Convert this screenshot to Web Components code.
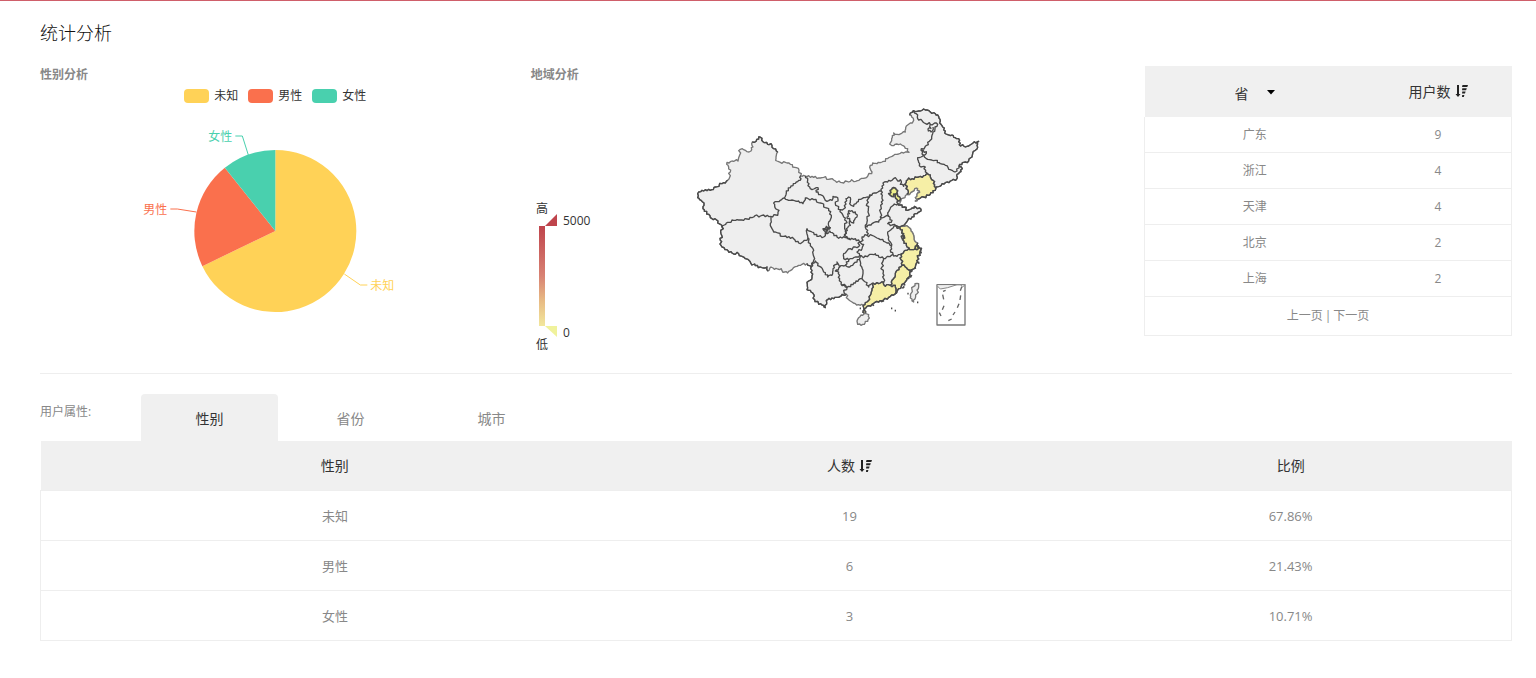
<!DOCTYPE html>
<html lang="zh-CN">
<head>
<meta charset="utf-8">
<meta name="viewport" content="width=device-width, initial-scale=1">
<title>统计分析</title>
<style>
  body {
    margin: 0;
    background: #fff;
    color: #888;
    font-family: "Open Sans", "Noto Sans CJK SC", sans-serif;
    font-size: 12px;
    line-height: 18px;
  }
</style>
</head>
<body>

<stats-page>
  <span slot="title">统计分析</span>
  <stats-panel slot="gender" heading="性别分析"><gender-chart></gender-chart></stats-panel>
  <stats-panel slot="region" heading="地域分析"><region-chart></region-chart></stats-panel>
  <province-table slot="provinces"></province-table>
  <user-attributes slot="attributes"></user-attributes>
</stats-page>

<script>
const GENDERS = [
  { name: '未知', count: 19, ratio: '67.86%', color: '#ffd257' },
  { name: '男性', count: 6, ratio: '21.43%', color: '#fa704d' },
  { name: '女性', count: 3, ratio: '10.71%', color: '#49d0ae' }
]

const PROVINCES = [
  ['广东', 9],
  ['浙江', 4],
  ['天津', 4],
  ['北京', 2],
  ['上海', 2]
]

class StatsPage extends HTMLElement {
  constructor() {
    super()
    this.shadow = this.attachShadow({ mode: 'open' })
  }

  connectedCallback() {
    this.shadow.innerHTML = /* html */`
      <style>
        :host {
          display: block;
          border-top: 1px solid #cf5f6a;
          padding: 20px 24px 36px 40px;
        }

        h1 {
          margin: 0 0 21px;
          color: #111;
          font-size: 18px;
          font-weight: 300;
          line-height: 24px;
        }

        .overview {
          display: grid;
          grid-template-columns: 4fr 5fr 3fr;
          padding-bottom: 17px;
          border-bottom: 1px solid #eee;
          margin-bottom: 20px;
        }
      </style>

      <main>
        <h1><slot name="title"></slot></h1>
        <div class="overview">
          <slot name="gender"></slot>
          <slot name="region"></slot>
          <slot name="provinces"></slot>
        </div>
        <slot name="attributes"></slot>
      </main>
    `
  }
}

class StatsPanel extends HTMLElement {
  constructor() {
    super()
    this.shadow = this.attachShadow({ mode: 'open' })
  }

  connectedCallback() {
    this.shadow.innerHTML = /* html */`
      <style>
        :host {
          display: block;
          min-width: 0;
        }

        h2 {
          margin: 0;
          font-size: 12px;
          font-weight: 700;
          line-height: 18px;
        }
      </style>

      <h2>${this.getAttribute('heading')}</h2>
      <slot></slot>
    `
  }
}

class GenderChart extends HTMLElement {
  constructor() {
    super()
    this.shadow = this.attachShadow({ mode: 'open' })
  }

  connectedCallback() {
    this.shadow.innerHTML = /* html */`
      <style>
        :host {
          display: block;
          padding: 3px 20px 0 0;
        }

        ul {
          display: flex;
          justify-content: center;
          gap: 10px;
          margin: 0;
          padding: 0;
          list-style: none;
          color: #333;
        }

        li {
          display: flex;
          align-items: center;
          gap: 5px;
        }

        i {
          width: 25px;
          height: 14px;
          border-radius: 4px;
        }

        svg {
          display: block;
          width: 100%;
          height: 200px;
          margin-top: 14px;
        }
      </style>

      <ul>
        ${GENDERS.map(g => `<li><i style="background:${g.color}"></i>${g.name}</li>`).join('')}
      </ul>
      <svg viewBox="-150 -112 300 200" font-size="12">
        ${this.slices()}
        <g fill="none">
          <path d="M69 43 L85 54 H92" stroke="#ffd257"/>
          <path d="M-79 -19 L-98 -22 H-105" stroke="#fa704d"/>
          <path d="M-27 -76 L-33 -95 H-40" stroke="#49d0ae"/>
        </g>
        <text x="95" y="59" fill="#ffd257">未知</text>
        <text x="-108" y="-17" fill="#fa704d" text-anchor="end">男性</text>
        <text x="-43" y="-90" fill="#49d0ae" text-anchor="end">女性</text>
      </svg>
    `
  }

  slices() {
    const r = 81
    const total = GENDERS.reduce((sum, g) => sum + g.count, 0)
    let from = 0
    return GENDERS.map(g => {
      const to = from + g.count / total * Math.PI * 2
      const large = to - from > Math.PI ? 1 : 0
      const d = `M0 0 L${r * Math.sin(from)} ${-r * Math.cos(from)} A${r} ${r} 0 ${large} 1 ${r * Math.sin(to)} ${-r * Math.cos(to)} Z`
      from = to
      return `<path d="${d}" fill="${g.color}"/>`
    }).join('')
  }
}

// Outline of the mainland, clockwise from the northern tip of Xinjiang
const MAINLAND = '209,110 215,114 218,124 232,132 245,135 250,145 262,155 257,170 256,180 265,184 285,186 300,192 318,202 326,210 331,226 345,227 370,231 400,231 420,236 450,246 480,243 510,236 532,228 545,215 540,195 547,188 560,190 575,185 595,172 620,162 640,158 656,156 652,145 642,138 625,133 610,136 598,131 604,115 610,98 620,102 632,100 645,95 646,82 660,68 670,60 664,50 658,44 665,36 680,33 695,30 710,29 720,35 735,40 745,48 750,62 757,80 763,98 772,103 785,104 795,112 808,120 807,133 820,137 835,137 848,128 865,123 860,135 855,150 847,160 845,170 835,182 820,186 808,192 813,200 812,214 800,222 800,235 785,240 770,245 755,250 748,258 736,265 720,282 700,290 682,296 675,302 680,288 688,276 682,265 673,265 662,276 650,282 644,292 632,296 630,305 622,309 630,314 642,320 652,330 662,326 672,318 692,327 688,334 675,340 665,350 652,360 645,370 632,378 648,376 662,392 670,405 673,422 682,428 686,442 692,448 688,460 682,472 682,485 675,500 665,508 658,520 650,535 640,550 625,565 615,580 600,588 580,598 565,605 545,612 530,618 522,630 525,640 518,636 520,622 518,615 510,615 495,610 480,602 472,595 468,582 455,582 450,588 430,595 408,600 405,622 400,615 385,612 373,598 370,582 360,570 350,568 355,542 365,532 362,500 350,490 335,492 320,498 305,508 292,518 278,516 273,505 252,507 242,500 233,512 230,500 210,500 195,496 180,485 165,475 145,460 125,458 110,448 95,440 90,420 94,405 95,380 82,368 78,358 65,355 55,342 42,333 38,325 41,315 32,300 22,292 22,280 35,270 60,270 75,260 95,250 112,240 120,215 115,200 110,186 125,182 143,182 150,147 165,150 182,152 188,140 186,125 198,122 205,110'

// Borders between provinces
const BORDERS = [
  '331,226 330,240 318,245 300,262 288,272 282,293',
  '282,293 270,300 250,308 254,322 266,330 262,345 242,348',
  '95,380 108,368 140,358 160,360 190,350 220,344 242,348',
  '242,348 240,370 250,395 280,408 310,415 330,430 348,420 352,412',
  '282,293 300,300 325,302 338,310 345,293 370,298 390,308 415,325 423,345 415,365 418,382 398,385 405,400',
  '352,412 350,385 365,395 380,408 400,410 405,400 418,392 430,400 440,410 465,412 480,418',
  '398,385 412,392 420,382 408,378 412,400',
  '352,412 360,430 370,450 370,480 362,500',
  '345,227 352,240 360,265 383,262 378,275 395,285 405,300 425,300 428,288 442,292 436,315 450,328 465,322 467,295 480,292 478,310 490,318 500,305 515,295 530,290 552,278 573,272',
  '450,328 458,345 468,362 463,385 465,408',
  '475,330 495,335 500,350 490,368 478,360 470,350 478,340 475,330',
  '478,360 480,375 468,385 465,408',
  '540,283 530,310 535,340 530,365 525,375 532,390 530,405',
  '530,405 515,410 518,420 508,425 495,415 480,418 465,408',
  '573,272 575,290 572,320 570,350 565,365 545,370 530,380 525,375',
  '573,272 578,248 592,245 605,240 615,232 622,242 630,238 630,252 640,258 645,250 652,268 650,282',
  '622,309 605,318 592,338 595,348 570,350',
  '595,348 605,360 592,370 605,374 617,376 632,378',
  '617,376 605,385 592,395 595,410 600,425 605,435',
  '530,405 545,405 565,415 585,425 605,435',
  '605,435 600,450 608,462',
  '508,425 520,432 515,445 500,455 508,465 520,472 535,465 555,460 570,472 580,475 592,468 608,462',
  '508,425 500,442 480,445 460,460 460,475 475,478 490,472 508,465',
  '617,376 630,388 640,400 638,420 648,435 655,442',
  '655,442 645,450 635,460',
  '608,462 620,468 635,460',
  '655,442 665,448 675,446 686,442',
  '635,460 632,478 635,495',
  '635,495 648,502 660,510 665,508',
  '635,495 620,510 615,525 605,540 600,555',
  '600,555 615,555 617,570 615,580',
  '600,555 585,558 580,545',
  '580,475 575,500 578,520 580,545',
  '580,545 565,550 548,548',
  '548,548 545,565 540,585 530,605 518,615',
  '548,548 535,560 525,545 515,535 518,510 510,495 508,478 508,465',
  '508,478 490,490 478,500 465,495 448,500 435,512 445,515 448,535 452,552',
  '362,500 375,482 388,498 400,515 412,530 425,525 428,505 440,485 448,500',
  '475,478 470,490 465,495',
  '452,552 475,558 490,548 505,538 515,535',
  '452,552 470,562 460,570 468,582',
  '665,36 678,40 682,55 698,65 720,72 738,68 740,78 728,95 720,120 705,138 692,150 700,165',
  '720,72 722,84 713,86 714,92 722,95 728,80',
  '692,150 708,154 700,165 718,178 735,180 750,190 765,195 780,208 800,212 808,192',
  '700,165 682,172 688,190 692,200 705,200 705,215 712,220',
  '645,250 652,238 665,235 685,230 705,225 712,220 720,230 728,240 732,258 736,265'
]

// Coasts and land borders that are drawn as heavily as the province borders
const EDGES = [
  '658,44 665,36 680,33 695,30 710,29 720,35 735,40 745,48 750,62 757,80 763,98 772,103 785,104 795,112 808,120 807,133 820,137 835,137 848,128 865,123 860,135 855,150 847,160 845,170 835,182 820,186 808,192 813,200 812,214 800,222 800,235 785,240 770,245 755,250 748,258 736,265 720,282 700,290 682,296',
  '622,309 630,314 642,320 652,330 662,326 672,318 692,327 688,334 675,340 665,350 652,360 645,370 632,378',
  '682,428 686,442 692,448 688,460 682,472 682,485 675,500 665,508 658,520 650,535 640,550 625,565 615,580 600,588 580,598 565,605 545,612 530,618 522,630 525,640 518,636 520,622 518,615',
  '468,582 455,582 450,588 430,595 408,600 405,622 400,615 385,612 373,598 370,582 360,570 350,568 355,542 365,532 362,500 350,490',
  '233,512 230,500 210,500 195,496 180,485 165,475 145,460 125,458 110,448 95,440 90,420 94,405 95,380 82,368 78,358 65,355 55,342 42,333 38,325 41,315 32,300 22,292 22,280 35,270 60,270 75,260 95,250 112,240',
  '186,125 198,122 205,110 209,110 215,114 218,124 232,132 245,135 250,145 262,155'
]

// Provinces that have users, filled by the scale
const ACTIVE = [
  // 辽宁
  '650,282 652,268 645,250 652,238 665,235 685,230 705,225 712,220 720,230 728,240 732,258 736,265 720,282 700,290 682,296 675,302 680,288 688,276 682,265 673,265 662,276',
  // 江苏
  '617,376 630,388 640,400 638,420 648,435 655,442 665,448 675,446 686,442 682,428 673,422 670,405 662,392 648,376 632,378',
  // 浙江
  '655,442 645,450 635,460 632,478 635,495 648,502 660,510 665,508 675,500 682,485 682,472 688,460 692,448 686,442 675,446 665,448',
  // 福建
  '635,495 620,510 615,525 605,540 600,555 615,555 617,570 615,580 625,565 640,550 650,535 658,520 665,508 660,510 648,502',
  // 广东
  '548,548 565,550 580,545 585,558 600,555 615,555 617,570 615,580 600,588 580,598 565,605 545,612 530,618 522,630 525,640 518,636 520,622 518,615 530,605 540,585 545,565'
]

const CITIES = [
  // 北京
  '595,280 602,276 604,267 610,262 618,268 620,276 615,282 604,288',
  // 天津
  '615,282 621,280 628,290 627,302 620,306 616,294',
  // 上海
  '675,438 681,435 685,444 680,448 674,445'
]

class RegionChart extends HTMLElement {
  constructor() {
    super()
    this.shadow = this.attachShadow({ mode: 'open' })
  }

  connectedCallback() {
    this.shadow.innerHTML = /* html */`
      <style>
        :host {
          display: grid;
          grid-template-columns: 1fr auto 1fr;
          padding-top: 16px;
        }

        .scale {
          width: 80px;
          height: 160px;
          margin-top: 96px;
        }

        .map {
          width: 300px;
          height: 240px;
        }
      </style>

      <svg class="scale" viewBox="0 0 80 160" font-size="12" fill="#333">
        <defs>
          <linearGradient id="heat" x1="0" y1="0" x2="0" y2="1">
            <stop offset="0" stop-color="#bf444c"/>
            <stop offset=".5" stop-color="#d88273"/>
            <stop offset=".75" stop-color="#e8bb84"/>
            <stop offset="1" stop-color="#f2e79c"/>
          </linearGradient>
        </defs>
        <text x="5" y="17">高</text>
        <rect x="8" y="30" width="6" height="100" fill="url(#heat)"/>
        <path d="M14 30 L26 18 V30 Z" fill="#bf444c"/>
        <path d="M14 130 H26 V141 Z" fill="#f0f29c"/>
        <text x="32" y="29">5000</text>
        <text x="32" y="141">0</text>
        <text x="5" y="153">低</text>
      </svg>

      <svg class="map" viewBox="-10 -1 900 720" stroke="#4a4a4a" stroke-width="4" stroke-linejoin="round" fill="#eee">
        <path d="${this.rough(MAINLAND, true)}" stroke="#777"/>
        ${ACTIVE.map(p => `<path d="${this.rough(p, true)}" fill="#f6efa6" stroke="#777"/>`).join('')}
        ${[...BORDERS, ...EDGES].map(p => `<path d="${this.rough(p)}" fill="none"/>`).join('')}
        ${CITIES.map(p => `<path d="${this.rough(p, true)}" fill="#eef08a" stroke-width="5"/>`).join('')}
        <path d="M633 408l8 -3 2 8 -7 3zM690 446l5 -3M688 455l6 2M683 466l5 -1M672 504l5 -2M652 535l5 -3M640 553l5 1M572 604l9 -3M545 612l6 4" fill="none" stroke-width="5"/>
        <path d="${this.rough('505,652 512,644 525,639 535,643 533,658 522,672 512,675 502,672 500,662', true)}" stroke="#777"/>
        <path d="${this.rough('674,550 685,550 684,565 680,580 673,597 670,605 665,596 660,584 665,568', true)}" stroke="#777"/>
        <path d="M651 580h4M680 606h4M602 624h4M613 631h4M508 624h4M690 451l2 8M684 484l2 6M664 524l-4 8M642 558l-6 6" stroke-width="5" fill="none"/>
        <rect x="740" y="553" width="84" height="121" fill="#fff" stroke="#777"/>
        <path d="M740 556l10 10 22 -4 28 -9h24l-8 8 -4 -7" fill="#eee" stroke="#888" stroke-width="3"/>
        <path d="M758 573l8 -3M757 583l3 14M761 616l-5 12M747 637l5 10M774 661l10 -5M788 644l6 -9M801 622l5 -12M809 599l2 -14M810 571l4 -11" fill="none" stroke="#666"/>
      </svg>
    `
  }

  // Breaks each segment into small bends. The bends depend only on the two
  // ends, so neighbours that share a border get the same line.
  rough(list, closed) {
    const points = list.split(' ').map(p => p.split(',').map(Number))
    if (closed) points.push(points[0])
    let d = `M${points[0]}`
    for (let i = 1; i < points.length; i++) {
      const a = points[i - 1]
      const b = points[i]
      const forward = a[0] < b[0] || (a[0] === b[0] && a[1] < b[1])
      const [s, e] = forward ? [a, b] : [b, a]
      const dx = e[0] - s[0]
      const dy = e[1] - s[1]
      const len = Math.hypot(dx, dy)
      const steps = Math.round(len / 5)
      const bends = []
      for (let k = 1; k < steps; k++) {
        const n = Math.sin(s[0] * 12.9 + s[1] * 78.2 + k * 37.7) * 43758.5
        const off = (n - Math.floor(n) - 0.5) * 8
        const t = k / steps
        bends.push([s[0] + dx * t - dy / len * off, s[1] + dy * t + dx / len * off].map(Math.round))
      }
      if (!forward) bends.reverse()
      d += [...bends, b].map(p => `L${p}`).join('')
    }
    return closed ? d + 'Z' : d
  }
}

class SortIcon extends HTMLElement {
  constructor() {
    super()
    this.shadow = this.attachShadow({ mode: 'open' })
  }

  connectedCallback() {
    this.shadow.innerHTML = /* html */`
      <style>
        :host {
          display: inline-block;
          width: 13px;
          height: 13px;
        }

        svg {
          display: block;
        }
      </style>

      <svg width="13" height="13" viewBox="0 0 13 13" fill="#222">
        <path d="M2 0h2v9h1.500L3 12 .5 9H2z"/>
        <path d="M7.500 0H13l-.7 2H7zM7.300 3.300h4.500l-.7 2H7zM7.300 6.600h3.300l-.6 2H7zM7.200 9.900h2.200l-.6 2H7z"/>
      </svg>
    `
  }
}

class ProvinceTable extends HTMLElement {
  constructor() {
    super()
    this.shadow = this.attachShadow({ mode: 'open' })
  }

  connectedCallback() {
    this.shadow.innerHTML = /* html */`
      <style>
        :host {
          display: block;
        }

        table {
          width: 100%;
          border-collapse: collapse;
          table-layout: fixed;
          text-align: center;
        }

        th, td {
          padding: 0;
        }

        th {
          height: 51px;
          background: #f0f0f0;
          color: #333;
          font-weight: 400;
        }

        th:first-child {
          width: 60%;
        }

        td {
          height: 35px;
          border-bottom: 1px solid #eee;
        }

        tbody {
          border: 1px solid #eee;
          border-top: 0;
        }

        .pick {
          display: inline-flex;
          position: relative;
          vertical-align: middle;
        }

        .pick svg {
          position: absolute;
          right: 0;
          top: 10px;
          pointer-events: none;
        }

        select, button {
          border: 0;
          padding: 0;
          background: none;
          color: inherit;
          font: inherit;
          font-size: 14px;
          line-height: 20px;
          cursor: pointer;
        }

        select {
          appearance: none;
          width: 40px;
          padding-top: 4px;
        }

        th button {
          display: inline-flex;
          align-items: center;
          gap: 4px;
          vertical-align: middle;
        }

        nav {
          display: flex;
          justify-content: center;
          gap: 2px;
          padding: 10px 0;
          border: 1px solid #eee;
          border-top: 0;
        }

        a {
          color: inherit;
          text-decoration: none;
        }
      </style>

      <table>
        <thead>
          <tr>
            <th>
              <span class="pick">
                <select aria-label="地区">
                  <option>省</option>
                  <option>市</option>
                </select>
                <svg width="8" height="5" viewBox="0 0 8 5"><path d="M0 0h8L4 4.500z"/></svg>
              </span>
            </th>
            <th><button type="button">用户数<sort-icon></sort-icon></button></th>
          </tr>
        </thead>
        <tbody>
          ${PROVINCES.map(([name, users]) => `<tr><td>${name}</td><td>${users}</td></tr>`).join('')}
        </tbody>
      </table>
      <nav><a href="#prev">上一页</a><span>|</span><a href="#next">下一页</a></nav>
    `
  }
}

class UserAttributes extends HTMLElement {
  constructor() {
    super()
    this.shadow = this.attachShadow({ mode: 'open' })
  }

  select(tab) {
    this.shadow.querySelectorAll('[role=tab]').forEach(t => {
      t.setAttribute('aria-selected', t === tab)
    })
  }

  connectedCallback() {
    this.shadow.innerHTML = /* html */`
      <style>
        :host {
          display: block;
        }

        .bar {
          display: flex;
          align-items: flex-start;
        }

        .label {
          width: 101px;
          line-height: 36px;
        }

        .tabs {
          display: flex;
          gap: 4px;
        }

        .tabs button {
          width: 137px;
          height: 47px;
          border: 0;
          border-radius: 4px 4px 0 0;
          padding: 2px 0 0;
          background: none;
          color: #888;
          font: inherit;
          font-size: 14px;
          cursor: pointer;
        }

        .tabs button[aria-selected=true] {
          background: #f0f0f0;
          color: #333;
        }

        table {
          width: 100%;
          border-collapse: collapse;
          table-layout: fixed;
          text-align: center;
          font-size: 13px;
        }

        th, td {
          padding: 0;
        }

        th {
          height: 49px;
          background: #f0f0f0;
          color: #333;
          font-size: 14px;
          font-weight: 400;
        }

        th:first-child {
          width: 40%;
        }

        td {
          height: 49px;
          border-bottom: 1px solid #eee;
        }

        tbody {
          border: 1px solid #eee;
        }

        th button {
          display: inline-flex;
          align-items: center;
          gap: 4px;
          border: 0;
          padding: 0;
          background: none;
          color: inherit;
          font: inherit;
          cursor: pointer;
          vertical-align: middle;
        }
      </style>

      <div class="bar">
        <span class="label">用户属性:</span>
        <div class="tabs" role="tablist">
          <button type="button" role="tab" aria-selected="true">性别</button>
          <button type="button" role="tab" aria-selected="false">省份</button>
          <button type="button" role="tab" aria-selected="false">城市</button>
        </div>
      </div>
      <table>
        <thead>
          <tr>
            <th>性别</th>
            <th><button type="button">人数<sort-icon></sort-icon></button></th>
            <th>比例</th>
          </tr>
        </thead>
        <tbody>
          ${GENDERS.map(g => `<tr><td>${g.name}</td><td>${g.count}</td><td>${g.ratio}</td></tr>`).join('')}
        </tbody>
      </table>
    `

    this.shadow.querySelectorAll('[role=tab]').forEach(tab => {
      tab.addEventListener('click', () => this.select(tab))
    })
  }
}

customElements.define('stats-page', StatsPage)
customElements.define('stats-panel', StatsPanel)
customElements.define('gender-chart', GenderChart)
customElements.define('region-chart', RegionChart)
customElements.define('sort-icon', SortIcon)
customElements.define('province-table', ProvinceTable)
customElements.define('user-attributes', UserAttributes)
</script>
</body>
</html>
